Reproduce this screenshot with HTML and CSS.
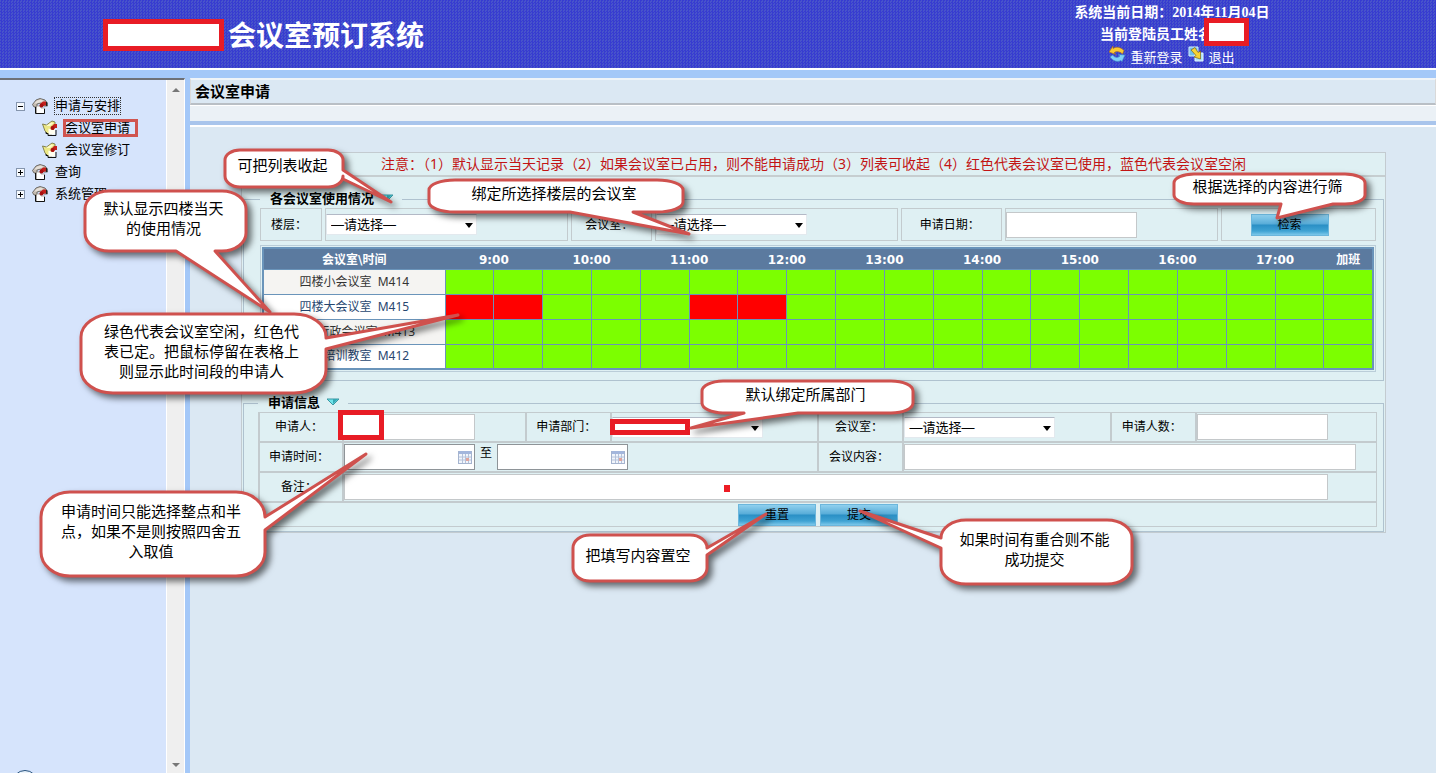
FILE: index.html
```html
<!DOCTYPE html>
<html lang="zh-CN">
<head>
<meta charset="utf-8">
<title>会议室预订系统</title>
<link rel="stylesheet" href="styles.css">
</head>
<body>
<svg class="defs" aria-hidden="true">
  <symbol id="house" viewBox="0 0 16 16">
    <path d="M.5 6.500L4 2l4-1.500L13 2l2.500 3v3H12L9 5 5 6v3H2z" fill="#c4bbb0" stroke="#57534c" stroke-width=".8"/>
    <path d="M2 5.500L5 2.500l4-1 3 1.500-4 1.500-4 1z" fill="#e6e0d8"/>
    <path d="M4.500 8H8l1 2h3.500v5.500h-8z" fill="#fff" stroke="#8d877c" stroke-width=".7"/>
    <path d="M3.500 9v6.500h9V11" fill="none" stroke="#111" stroke-width="1"/>
    <path d="M11 3.500h3v4h-2L10.500 9 8 8l.5-2.500z" fill="#c4201c"/><circle cx="9.500" cy="7.500" r="2" fill="#a81010"/><path d="M14.500 4v4" stroke="#222"/>
  </symbol>
  <symbol id="page" viewBox="0 0 16 16">
    <path d="M.5 4l4 1L10 1l3 1v3l-3 4v5H6L3 11z" fill="#ece886" stroke="#6d6936" stroke-width=".8"/>
    <path d="M4 6l5-3.500L11.500 3 8 6z" fill="#fcfacb"/>
    <path d="M6.500 8.500L9 9.500l4-1V14.500H6.500z" fill="#fffef0"/>
    <path d="M4 12v1.500h2v2h8V10" fill="none" stroke="#111"/>
    <path d="M12 4h3v4h-2l-1.500 2L9 9l.5-2.500z" fill="#c4201c"/><circle cx="10.500" cy="8" r="2" fill="#a81010"/>
  </symbol>
  <symbol id="calendar" viewBox="0 0 14 14">
    <rect x=".5" y="1.500" width="13" height="12" fill="#f1f5fb" stroke="#a5b4cf"/>
    <rect x="1" y="1" width="12" height="3" fill="#a3b6dc"/>
    <path d="M1 7h12M1 10h12M4.500 4v9M7.500 4v9M10.500 4v9" stroke="#b5c2da"/>
    <rect x="8" y="8" width="3" height="3" fill="#e0a49c"/>
  </symbol>
  <symbol id="fold" viewBox="0 0 14 8">
    <path d="M1 1h12L7 7z" fill="#6fe3ea" stroke="#3b97a3"/><path d="M7 6l5-5H7z" fill="#35a9b4"/>
  </symbol>
</svg>

<header class="banner">
  <div class="brand"><span class="redact redact-brand"></span><h1>会议室预订系统</h1></div>
  <div class="session">
    <p>系统当前日期：2014年11月04日</p>
    <p class="user">当前登陆员工姓名：<span class="redact redact-user"></span></p>
    <p class="links">
      <svg class="i16" viewBox="0 0 16 16"><path d="M0 6l4-6v2.500c4-2.500 8-1 11 2L13.500 8C10 5 7 5 5 7l2 1.500z" fill="#f9c934" stroke="#b06c12" stroke-width=".6"/><path d="M16 9l-3 6.500-1-1c-4 2-8 .5-11-3.500l2.500-2C6 12 9 12 11 10L9 8.500z" fill="#7fd0f7" stroke="#3e86c8" stroke-width=".6"/></svg>
      <a href="#">重新登录</a>
      <svg class="i16" viewBox="0 0 16 16"><path d="M1 1h9v9H1z" fill="#6fc0ee" stroke="#d7f0fc"/><path d="M7 7h8v8H7z" fill="#a9e0fa" stroke="#e5f7fe"/><path d="M3 4l4-2.500 3 5L12.500 5v8L6 11l2-1.500z" fill="#f6d335" stroke="#806310" stroke-width=".7"/></svg>
      <a href="#">退出</a>
    </p>
  </div>
</header>

<div class="frame">
  <nav class="side">
    <ul class="tree">
      <li><button class="toggle" aria-label="收起"><svg viewBox="0 0 7 7"><path d="M1 3.500h5"/></svg></button><svg class="i16"><use href="#house"/></svg><a class="focused" href="#">申请与安排</a></li>
      <li class="child"><svg class="i16"><use href="#page"/></svg><a class="marked" href="#">会议室申请</a></li>
      <li class="child"><svg class="i16"><use href="#page"/></svg><a href="#">会议室修订</a></li>
      <li><button class="toggle" aria-label="展开"><svg viewBox="0 0 7 7"><path d="M1 3.500h5M3.500 1v5"/></svg></button><svg class="i16"><use href="#house"/></svg><a href="#">查询</a></li>
      <li><button class="toggle" aria-label="展开"><svg viewBox="0 0 7 7"><path d="M1 3.500h5M3.500 1v5"/></svg></button><svg class="i16"><use href="#house"/></svg><a href="#">系统管理</a></li>
    </ul>
    <div class="scroll"><i class="up"></i><i class="down"></i></div>
    <span class="orb"></span>
  </nav>

  <main class="main">
    <h2 class="title">会议室申请</h2>
    <div class="strip"></div>
    <div class="panel">
      <p class="notice">注意：（1）默认显示当天记录（2）如果会议室已占用，则不能申请成功（3）列表可收起（4）红色代表会议室已使用，蓝色代表会议室空闲</p>

      <fieldset>
        <legend>各会议室使用情况 <svg class="fold"><use href="#fold"/></svg></legend>
        <div class="filter">
          <label for="floor">楼层：</label>
          <div><span class="pick"><select id="floor"><option>—请选择—</option></select></span></div>
          <label for="room">会议室：</label>
          <div><span class="pick"><select id="room"><option>—请选择—</option></select></span></div>
          <label for="day">申请日期：</label>
          <div><input class="box" id="day" type="text"></div>
          <div class="mid"><button class="btn">检索</button></div>
        </div>
        <div class="grid-wrap">
          <table class="grid">
            <colgroup><col class="name"><col span="19"></colgroup>
            <thead><tr><th>会议室\时间</th><th colspan="2">9:00</th><th colspan="2">10:00</th><th colspan="2">11:00</th><th colspan="2">12:00</th><th colspan="2">13:00</th><th colspan="2">14:00</th><th colspan="2">15:00</th><th colspan="2">16:00</th><th colspan="2">17:00</th><th>加班</th></tr></thead>
            <tbody>
              <tr><th>四楼小会议室&nbsp; M414</th><td></td><td></td><td></td><td></td><td></td><td></td><td></td><td></td><td></td><td></td><td></td><td></td><td></td><td></td><td></td><td></td><td></td><td></td><td></td></tr>
              <tr><th>四楼大会议室&nbsp; M415</th><td class="busy"></td><td class="busy"></td><td></td><td></td><td></td><td class="busy"></td><td class="busy"></td><td></td><td></td><td></td><td></td><td></td><td></td><td></td><td></td><td></td><td></td><td></td><td></td></tr>
              <tr><th>四楼行政会议室&nbsp; M413</th><td></td><td></td><td></td><td></td><td></td><td></td><td></td><td></td><td></td><td></td><td></td><td></td><td></td><td></td><td></td><td></td><td></td><td></td><td></td></tr>
              <tr><th>四楼培训教室&nbsp; M412</th><td></td><td></td><td></td><td></td><td></td><td></td><td></td><td></td><td></td><td></td><td></td><td></td><td></td><td></td><td></td><td></td><td></td><td></td><td></td></tr>
            </tbody>
          </table>
        </div>
      </fieldset>

      <fieldset>
        <legend>申请信息 <svg class="fold"><use href="#fold"/></svg></legend>
        <div class="form">
          <label for="who">申请人：</label>
          <div><input class="box" id="who" type="text"></div>
          <label for="dept">申请部门：</label>
          <div><span class="pick"><select id="dept"><option></option></select></span></div>
          <label for="room2">会议室：</label>
          <div><span class="pick"><select id="room2"><option>—请选择—</option></select></span></div>
          <label for="count">申请人数：</label>
          <div><input class="box" id="count" type="text"></div>

          <label for="from">申请时间：</label>
          <div class="span3">
            <span class="date"><input class="box" id="from" type="text"><svg><use href="#calendar"/></svg></span>
            <label class="to" for="until">至</label>
            <span class="date"><input class="box" id="until" type="text"><svg><use href="#calendar"/></svg></span>
          </div>
          <label for="topic">会议内容：</label>
          <div class="span3 topic"><input class="box" id="topic" type="text"></div>

          <label for="note">备注：</label>
          <div class="span7 note"><input class="box" id="note" type="text"></div>
          <div class="actions"><button class="btn">重置</button><button class="btn">提交</button></div>
        </div>
      </fieldset>
    </div>
  </main>
</div>

<aside class="notes">
  <span class="redact redact-who"></span>
  <span class="redact redact-dept"></span>
  <span class="dot"></span>
  <div class="note-box n1"><svg viewBox="224 148 121 40"><path d="M240 150H328A15 10 0 0 1 343 160V170L391 202L343 179V176A15 11 0 0 1 328 187H240A15 11 0 0 1 225 176V160A15 10 0 0 1 240 150Z"/></svg><p>可把列表收起</p></div>
  <div class="note-box n2"><svg viewBox="84 190 163 62"><path d="M109 191H222A24 18 0 0 1 246 209V233A24 18 0 0 1 222 251H215L270 312L176 251H109A24 18 0 0 1 85 233V209A24 18 0 0 1 109 191Z"/></svg><p>默认显示四楼当天<br>的使用情况</p></div>
  <div class="note-box n3"><svg viewBox="80 313 247 81"><path d="M113 314H294A32 23 0 0 1 326 337V338L458 315L326 349V370A32 23 0 0 1 294 393H113A32 23 0 0 1 81 370V337A32 23 0 0 1 113 314Z"/></svg><p>绿色代表会议室空闲，红色代<br>表已定。把鼠标停留在表格上<br>则显示此时间段的申请人</p></div>
  <div class="note-box n4"><svg viewBox="428 179 256 34"><path d="M455 180H657A26 10 0 0 1 683 190V202A26 10 0 0 1 657 212H633L689 234L570 212H455A26 10 0 0 1 429 202V190A26 10 0 0 1 455 180Z"/></svg><p>绑定所选择楼层的会议室</p></div>
  <div class="note-box n5"><svg viewBox="1173 173 193 32"><path d="M1194 174H1345A20 9 0 0 1 1365 183V195A20 9 0 0 1 1345 204H1333L1277 218L1281 204H1194A20 9 0 0 1 1174 195V183A20 9 0 0 1 1194 174Z"/></svg><p>根据选择的内容进行筛</p></div>
  <div class="note-box n6"><svg viewBox="701 380 213 34"><path d="M723 381H891A22 10 0 0 1 913 391V403A22 10 0 0 1 891 413H798L691 428L744 413H723A22 10 0 0 1 702 403V391A22 10 0 0 1 723 381Z"/></svg><p>默认绑定所属部门</p></div>
  <div class="note-box n7"><svg viewBox="40 491 226 86"><path d="M70 492H236A29 25 0 0 1 265 517L366 454L265 530V552A29 24 0 0 1 236 576H70A29 24 0 0 1 41 552V517A29 25 0 0 1 70 492Z"/></svg><p>申请时间只能选择整点和半<br>点，如果不是则按照四舍五<br>入取值</p></div>
  <div class="note-box n8"><svg viewBox="572 534 136 48"><path d="M590 535H690A17 13 0 0 1 707 548L766 514L707 555V568A17 13 0 0 1 690 581H590A17 13 0 0 1 573 568V548A17 13 0 0 1 590 535Z"/></svg><p>把填写内容置空</p></div>
  <div class="note-box n9"><svg viewBox="940 519 193 66"><path d="M966 520H1107A25 18 0 0 1 1132 538V566A25 18 0 0 1 1107 584H966A25 18 0 0 1 941 566V548L860 511L941 538A25 18 0 0 1 966 520Z"/></svg><p>如果时间有重合则不能<br>成功提交</p></div>
</aside>
</body>
</html>
```
FILE: styles.css
```css
* { box-sizing: border-box; }
body, h1, h2, p, ul, fieldset { margin: 0; padding: 0; }
body {
  position: relative;
  display: flex;
  flex-direction: column;
  min-height: 100vh;
  overflow: hidden;
  background: #a4c8f8;
  color: #000;
  font: 12px/18px "Liberation Sans", "Noto Sans CJK SC", sans-serif;
}
a { color: inherit; text-decoration: none; }
input, select, button { font: inherit; color: inherit; margin: 0; border-radius: 0; }
.defs { position: absolute; width: 0; height: 0; }
.i16 { width: 16px; height: 16px; flex: none; }

/* banner */
.banner {
  display: flex;
  justify-content: space-between;
  height: 70px;
  padding: 0 165px 0 103px;
  border-bottom: 2px solid #fff;
  background: repeating-conic-gradient(#373cd0 0 25%, #4854ca 0 50%) 0 0 / 3px 3px;
  color: #fff;
}
.brand { display: flex; align-items: center; gap: 4px; padding-top: 2px; }
.brand h1 { padding-top: 3px; font-size: 28px; line-height: 40px; font-weight: bold; }
.redact { background: #fff; border: 5px solid #e81c25; }
.redact-brand { width: 121px; height: 32px; }
.session { width: 198px; padding-top: 2px; text-align: center; font: bold 14px/22px "Liberation Serif", "Noto Sans CJK SC", serif; white-space: nowrap; }
.user { position: relative; padding-right: 18px; }
.redact-user { position: absolute; left: 131px; top: -6px; width: 45px; height: 28px; }
.links { display: flex; justify-content: center; gap: 5px; font-size: 13px; font-weight: normal; line-height: 24px; }

/* frame */
.frame { display: flex; flex: 1; margin-top: 8px; }
.side {
  position: relative;
  display: flex;
  width: 185px;
  flex: none;
  overflow: hidden;
  border-top: 2px solid #6d7076;
  border-right: 1px solid #fff;
  background: #d6e4fc;
}
.tree { flex: 1; padding: 15px 0 0 16px; list-style: none; font-size: 13px; line-height: 16px; white-space: nowrap; }
.tree li { display: flex; align-items: center; gap: 7px; height: 22px; }
.tree .child { padding-left: 26px; }
.toggle { width: 9px; height: 9px; padding: 0; border: 1px solid #8595ad; background: #f7fafe; display: flex; }
.toggle svg { width: 7px; height: 7px; stroke: #000; fill: none; }
.focused { outline: 1px dotted #333; }
.marked { position: relative; }
.marked::after { content: ""; position: absolute; inset: -1px -8px -1px -2px; border: 3px solid #d0544f; }
.scroll { display: flex; flex-direction: column; justify-content: space-between; align-items: center; width: 18px; padding: 8px 0 6px; border-left: 1px solid #fff; background: #efefef; }
.up, .down { border: 4px solid transparent; }
.up { border-top-width: 0; border-bottom-color: #777; }
.down { border-bottom-width: 0; border-top-color: #777; }
.orb { position: absolute; left: 12px; bottom: -23px; width: 26px; height: 26px; border: 1px solid #27527d; border-radius: 50%; background: #eaf3fb; }

.main { flex: 1; min-width: 0; margin-left: 5px; background: #dbe8f3; }
.title { height: 27px; padding-left: 4px; border: 1px solid #d9d9d9; border-top: 2px solid #f0f4f8; border-bottom: 2px solid #b9bfc5; font-size: 15px; line-height: 24px; }
.strip { height: 20px; border-bottom: 4px solid #a9c5ec; border-top: 1px solid #fff; background: #ebf1f6; box-shadow: 0 2px #fff; }

/* panel */
.panel { margin: 27px 50px 0 51px; border: 1px solid #c3cbd0; background: #dff0f3; }
.notice { padding: 0 0 1px; border-bottom: 2px solid #c6ced0; color: #c21414; font: 14px/21px "Noto Sans", "Noto Sans CJK SC", sans-serif; text-align: center; }
fieldset { min-width: 0; margin: 13px 1px 0; padding: 0 7px 8px 16px; border: 1px solid #afc2cf; }
fieldset + fieldset { padding: 0 6px 4px 14px; margin-bottom: 0; }
legend { padding: 0 6px 0 10px; font-size: 13px; font-weight: bold; line-height: 18px; white-space: nowrap; }
.fold { width: 14px; height: 8px; margin: 0 2px; vertical-align: 1px; }

.box { display: block; width: 131px; height: 26px; border: 1px solid #c4c8ca; background: #fff; padding: 0 4px; }
.pick { position: relative; display: block; width: 151px; }
.pick select { display: block; width: 100%; height: 21px; padding: 0 20px 0 4px; border: 1px solid #e3e9ee; border-top-color: #b3b9c6; background: #fff; appearance: none; font-size: 13px; line-height: 19px; }
.pick::after { content: ""; position: absolute; right: 4px; top: 9px; border: 4px solid transparent; border-top: 5px solid #000; border-bottom: 0; pointer-events: none; }
.btn { width: 78px; height: 22px; padding: 0; border: 1px solid #6bb6dc; background: linear-gradient(#8fd0ee, #58acd8 45%, #2a8fc5 50%, #3fa3d3 80%, #7cc8ea); line-height: 18px; }

.filter { display: grid; grid-template-columns: 62fr 243fr 81fr 244fr 101fr 213fr 155fr; gap: 3px; height: 33px; }
.filter > * { display: flex; align-items: center; min-width: 0; border: 1px solid #c3cbce; }
.filter > label, .filter > .mid { justify-content: center; padding-right: 4px; }
.filter > .mid { padding-right: 18px; }

.grid-wrap { margin-top: 4px; padding: 1px; border: 1px solid #bacdd8; }
.grid { width: 100%; table-layout: fixed; border-collapse: collapse; border: 2px solid #6a94ba; }
.grid .name { width: 182px; }
.grid th, .grid td { height: 25px; padding: 0; border: 1px solid #6a94ba; font-size: 12px; line-height: 16px; white-space: nowrap; }
.grid thead th { height: 21px; border-color: #5b7a9f; border-bottom-color: #6a94ba; background: #5b7a9f; color: #fff; font: bold 12px/16px "DejaVu Sans", "Noto Sans CJK SC", sans-serif; padding-top: 3px; }
.grid tbody th { background: #fff; color: #27466f; font: 12px/16px "Noto Sans", "Noto Sans CJK SC", sans-serif; }
.grid tbody tr:nth-child(odd) th { background: #f5f4f2; color: #333; }
.grid td { background: #7cff00; }
.grid .busy { background: #f00; }

.form { display: grid; grid-template-columns: 84fr 183fr 85fr 208fr 85fr 208fr 85fr 181fr; grid-template-rows: repeat(3, 30px) 24px; border: solid #c3cbce; border-width: 1px 1px 0 0; }
.form > * { display: flex; align-items: center; min-width: 0; border: solid #c3cbce; border-width: 0 0 2px 2px; }
.form > label { justify-content: center; padding-right: 4px; }
.form > .span3 { grid-column: span 3; }
.form > .span7 { grid-column: span 7; padding-right: 48px; }
.form > .topic { padding-right: 20px; }
.topic .box, .note .box { width: 100%; }
.form > .actions { grid-column: 1 / -1; justify-content: center; gap: 4px; border-bottom-width: 1px; }
.date { position: relative; }
.date .box { border-color: #8e9498; }
.date svg { position: absolute; right: 3px; top: 6px; width: 14px; height: 14px; }
.to { width: 22px; text-align: center; padding-bottom: 8px; }

/* review notes laid over the page */
.notes { position: absolute; left: 0; top: 0; }
.redact-who, .redact-dept, .dot, .note-box { position: absolute; }
.redact-who { left: 338px; top: 410px; width: 46px; height: 30px; }
.redact-dept { left: 610px; top: 419px; width: 80px; height: 16px; }
.dot { left: 724px; top: 485px; width: 6px; height: 7px; background: #ed1c24; }
.note-box { display: flex; align-items: center; justify-content: center; padding: 0 4px 4px 0; font-size: 15px; line-height: 20px; text-align: center; white-space: nowrap; }
.note-box svg { position: absolute; left: 0; top: 0; width: 100%; height: 100%; overflow: visible; fill: #fff; stroke: #cf514e; stroke-width: 3; stroke-linejoin: round; filter: drop-shadow(4px 4px 3px rgba(0, 0, 0, .55)); }
.note-box p { position: relative; }
.n1 { left: 224px; top: 148px; width: 121px; height: 40px; }
.n2 { left: 84px; top: 190px; width: 163px; height: 62px; }
.n3 { left: 80px; top: 313px; width: 247px; height: 81px; }
.n4 { left: 428px; top: 179px; width: 256px; height: 34px; }
.n5 { left: 1173px; top: 173px; width: 193px; height: 32px; }
.n6 { left: 701px; top: 380px; width: 213px; height: 34px; }
.n7 { left: 40px; top: 491px; width: 226px; height: 86px; }
.n8 { left: 572px; top: 534px; width: 136px; height: 48px; }
.n9 { left: 940px; top: 519px; width: 193px; height: 66px; }
```
